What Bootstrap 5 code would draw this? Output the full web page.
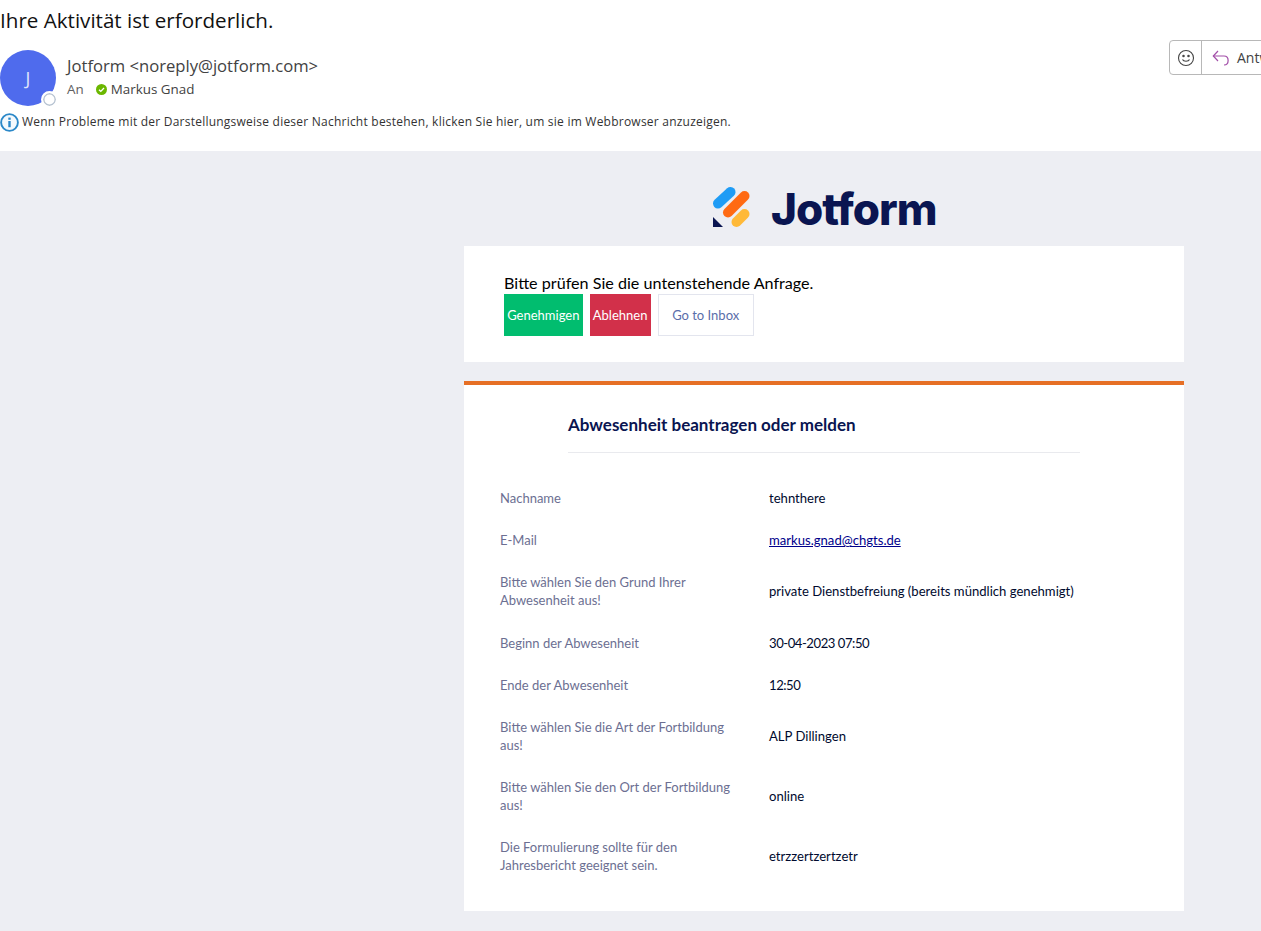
<!DOCTYPE html>
<html lang="de">
<head>
<meta charset="utf-8">
<title>Ihre Aktivität ist erforderlich.</title>
<link href="https://cdn.jsdelivr.net/npm/bootstrap@5.3.0/dist/css/bootstrap.min.css" rel="stylesheet">
<style>
html,body{height:931px;overflow:hidden;background:#fff}
body{font-family:"Open Sans","Noto Sans",sans-serif;color:#242424}
.mail-head{height:151px;position:relative;padding:0}
.subject{font-size:20.6px;line-height:28px;padding-top:6px;color:#111;margin:0;height:50px}
.sender{gap:11px;height:56px}
.avatar{width:56px;height:56px;border-radius:50%;background:#4f6bed;color:#dfe4fb;font-size:18px;position:relative;flex:none}
.presence{position:absolute;right:-2px;bottom:-1.500px;width:17px;height:17px;border-radius:50%;background:#fff;border:2px solid #fff;box-shadow:inset 0 0 0 1.500px #b8c4d2}
.from{font-size:16.640px;line-height:22px;color:#424242;padding-top:5px}
.to{font-size:13.400px;line-height:18px;color:#424242;margin-top:3px}
.to .lbl{color:#616161;margin-right:12px}
.info{font-size:12px;line-height:20px;color:#333;margin-top:6px;gap:3px;letter-spacing:.23px}
.actions{position:absolute;left:1169px;top:40px;width:120px;height:35px;border:1px solid #b8b8b8;border-radius:4px;background:#fff;font-size:14px;color:#424242}
.actions .smile{width:32px;flex:none;border-right:1px solid #b8b8b8}
.actions .reply{padding-left:10px;gap:7px;flex:none}
.canvas{background:#edeef3;height:780px;padding-left:464px}
.sheet{width:720px;font-family:Lato,"Open Sans",sans-serif}
.brand{height:95px;padding:36px 0 0 249px;gap:20px}
.brand-logo{flex:none}
.brand-name{font-family:Inter,Lato,sans-serif;font-weight:800;font-size:44px;line-height:56px;color:#0a1551;letter-spacing:-.022em;margin-top:-6px}
.panel{background:#fff}
.ask{height:116px;padding:26px 40px 0;font-size:16.150px;line-height:22px;color:#000}
.ask-btns{gap:7px}
.act{height:42px;display:flex;align-items:center;font-size:13px;padding:0 3.200px;color:#fff}
.act-ok{background:#01bd6f}
.act-no{background:#d2304a}
.act-in{background:#fff;color:#5a6eaa;border:1px solid #e3e5ee;padding:0 13.500px}
.detail{margin-top:19px;border-top:4px solid #e66f25;height:530px;padding-top:28px;font-size:13.100px}
.title{margin:0 104px;height:40px;border-bottom:1px solid #e9eaee;font-weight:700;font-size:17px;line-height:24px;color:#0a1551}
.rows{margin-top:24px;padding-left:36px}
.entry{padding:12px 0;line-height:18px;align-items:center}
.entry-tall{padding-bottom:13px}
.key{width:269px;padding-right:24px;color:#6c6f92;flex:none;font-size:13px}
.val{color:#000a2e}
.val a{color:#00008b}
.digits{letter-spacing:-.035em}
</style>
</head>
<body>
<header class="mail-head">
  <h1 class="subject fw-normal">Ihre Aktivität ist erforderlich.</h1>
  <div class="d-flex sender">
    <div class="avatar d-flex align-items-center justify-content-center">J<span class="presence"></span></div>
    <div>
      <div class="from">Jotform &lt;noreply@jotform.com&gt;</div>
      <div class="to d-flex align-items-center"><span class="lbl">An</span>
        <svg width="11" height="11" viewBox="0 0 11 11" class="me-1"><circle cx="5.500" cy="5.500" r="5.500" fill="#6bb700"/><path d="M3 5.700l1.800 1.700L8 4" fill="none" stroke="#fff" stroke-width="1.300"/></svg>
        <span>Markus Gnad</span></div>
    </div>
  </div>
  <div class="info d-flex align-items-center">
    <svg width="19" height="19" viewBox="0 0 19 19"><circle cx="9.500" cy="9.500" r="8.400" fill="#f4f9fd" stroke="#2b88c8" stroke-width="1.900"/><rect x="8.300" y="8" width="2.400" height="6.200" fill="#2b88c8"/><rect x="8.300" y="4.600" width="2.400" height="2.200" fill="#2b88c8"/></svg>
    <span>Wenn Probleme mit der Darstellungsweise dieser Nachricht bestehen, klicken Sie hier, um sie im Webbrowser anzuzeigen.</span>
  </div>
  <div class="actions d-flex">
    <div class="smile d-flex align-items-center justify-content-center">
      <svg width="18" height="18" viewBox="0 0 18 18" fill="none" stroke="#444" stroke-width="1.100"><circle cx="9" cy="9" r="7.500"/><path d="M5.500 10.500c1 2.400 6 2.400 7 0"/><circle cx="6.500" cy="7" r=".7" fill="#444"/><circle cx="11.500" cy="7" r=".7" fill="#444"/></svg>
    </div>
    <div class="reply d-flex align-items-center">
      <svg width="18" height="18" viewBox="0 0 18 18" fill="none" stroke="#a24ea8" stroke-width="1.200"><path d="M6 2L1.300 7 6 12"/><path d="M1.300 7H12c5.500 0 5.500 9 0 9"/></svg>
      <span>Antworten</span>
    </div>
  </div>
</header>
<main class="canvas">
  <div class="sheet">
    <div class="brand d-flex align-items-start">
      <svg width="38" height="40" viewBox="0 0 38 40" class="brand-logo">
        <path d="M5 16.500L17.500 5" stroke="#1f9cf5" stroke-width="10" stroke-linecap="round"/>
        <path d="M15 25.500L31.500 9" stroke="#ff6a13" stroke-width="10" stroke-linecap="round"/>
        <path d="M23.500 35L31.500 27" stroke="#ffb938" stroke-width="10" stroke-linecap="round"/>
        <path d="M0 30V40h10z" fill="#0a1551"/>
      </svg>
      <div class="brand-name">Jotform</div>
    </div>
    <section class="panel ask">
      <div>Bitte prüfen Sie die untenstehende Anfrage.</div>
      <div class="d-flex ask-btns">
        <a class="act act-ok text-decoration-none">Genehmigen</a>
        <a class="act act-no text-decoration-none">Ablehnen</a>
        <a class="act act-in text-decoration-none">Go to Inbox</a>
      </div>
    </section>
    <section class="panel detail">
      <div class="title">Abwesenheit beantragen oder melden</div>
      <div class="rows">
        <div class="d-flex entry"><div class="key">Nachname</div><div class="val">tehnthere</div></div>
        <div class="d-flex entry"><div class="key">E-Mail</div><div class="val"><a href="#">markus.gnad@chgts.de</a></div></div>
        <div class="d-flex entry entry-tall"><div class="key">Bitte wählen Sie den Grund Ihrer Abwesenheit aus!</div><div class="val">private Dienstbefreiung (bereits mündlich genehmigt)</div></div>
        <div class="d-flex entry"><div class="key">Beginn der Abwesenheit</div><div class="val digits">30-04-2023 07:50</div></div>
        <div class="d-flex entry"><div class="key">Ende der Abwesenheit</div><div class="val digits">12:50</div></div>
        <div class="d-flex entry"><div class="key">Bitte wählen Sie die Art der Fortbildung aus!</div><div class="val">ALP Dillingen</div></div>
        <div class="d-flex entry"><div class="key">Bitte wählen Sie den Ort der Fortbildung aus!</div><div class="val">online</div></div>
        <div class="d-flex entry"><div class="key">Die Formulierung sollte für den Jahresbericht geeignet sein.</div><div class="val">etrzzertzertzetr</div></div>
      </div>
    </section>
  </div>
</main>
<script src="https://cdn.jsdelivr.net/npm/bootstrap@5.3.0/dist/js/bootstrap.bundle.min.js"></script>
</body>
</html>
